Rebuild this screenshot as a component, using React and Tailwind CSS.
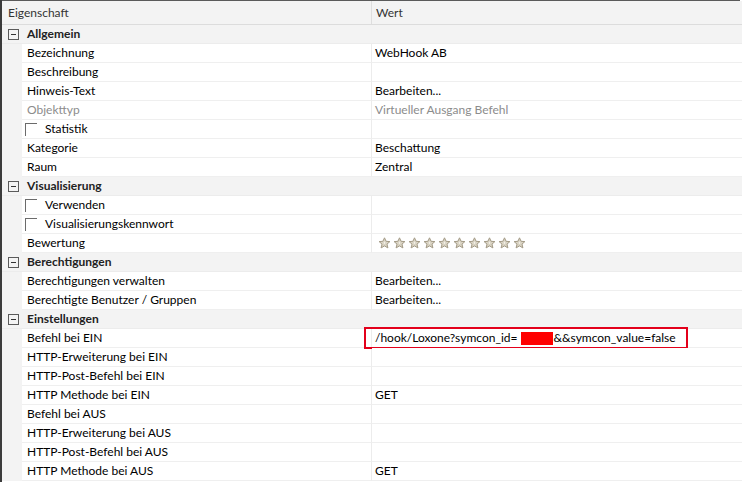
import React from "react";

const Star = () => (
  <svg width="13" height="12" viewBox="0 0 13 12" className="shrink-0">
    <path
      d="M6.5 0.8 L8.1 4.3 L11.9 4.6 L9 7.1 L9.9 10.9 L6.5 8.9 L3.1 10.9 L4 7.1 L1.1 4.6 L4.9 4.3 Z"
      fill="#d9d3c3"
      stroke="#a39a86"
      strokeWidth="1"
      strokeLinejoin="round"
    />
    <path d="M6.5 4.2 L7.3 6 L6.5 7.3 L5.7 6 Z" fill="#f4f1ea" />
  </svg>
);

const Checkbox = () => (
  <span className="inline-block w-[12px] h-[13px] border-t border-l border-[#6b6b6b] mr-[8px] ml-[-2px]" />
);

const Minus = () => (
  <span className="w-[11px] h-[11px] border border-[#5a5a5a] flex items-center justify-center">
    <span className="w-[5px] h-px bg-[#333]" />
  </span>
);

const Group = ({ title }) => (
  <div className="h-[19px] flex items-center bg-[#f3f3f3] border-b border-[#ececec]">
    <div className="w-[25px] pl-[6px] flex items-center">
      <Minus />
    </div>
    <span className="font-bold text-[#222]">{title}</span>
  </div>
);

const Row = ({ name, value, gray, check, children }) => (
  <div className="h-[19px] flex bg-[#f3f3f3]">
    <div className="w-[20px] shrink-0" />
    <div className="w-[350px] shrink-0 bg-white border-b border-[#efefef] border-r border-r-[#ececec] flex items-center pl-[5px]">
      {check && <Checkbox />}
      <span className={gray ? "text-[#8c8c8c]" : "text-black"}>{name}</span>
    </div>
    <div className="relative flex-1 bg-white border-b border-[#efefef] flex items-center pl-[3px]">
      {children ? children : <span className={gray ? "text-[#8c8c8c]" : "text-black"}>{value}</span>}
    </div>
  </div>
);

export default function App() {
  return (
    <div
      className="w-[742px] h-[482px] bg-white overflow-hidden flex text-[12px] leading-none"
      style={{ fontFamily: 'Lato, "Noto Sans", sans-serif' }}
    >
      <div className="w-[2px] bg-[#3b3b3b] shrink-0" />
      <div className="flex-1 flex flex-col">
        <div className="h-px bg-[#5a5a5a] mr-[2px]" />
        <div className="h-[24px] flex bg-[#f3f3f3] border-b border-[#dcdcdc] text-[#333]">
          <div className="w-[370px] pl-[6px] flex items-center border-r border-[#dedede]">Eigenschaft</div>
          <div className="flex-1 pl-[4px] flex items-center">Wert</div>
        </div>
        <Group title="Allgemein" />
        <Row name="Bezeichnung" value="WebHook AB" />
        <Row name="Beschreibung" value="" />
        <Row name="Hinweis-Text" value="Bearbeiten..." />
        <Row name="Objekttyp" value="Virtueller Ausgang Befehl" gray />
        <Row name="Statistik" value="" check />
        <Row name="Kategorie" value="Beschattung" />
        <Row name="Raum" value="Zentral" />
        <Group title="Visualisierung" />
        <Row name="Verwenden" value="" check />
        <Row name="Visualisierungskennwort" value="" check />
        <Row name="Bewertung">
          <div className="flex gap-[2px] pl-[3px]">
            {Array.from({ length: 10 }).map((_, i) => (
              <Star key={i} />
            ))}
          </div>
        </Row>
        <Group title="Berechtigungen" />
        <Row name="Berechtigungen verwalten" value="Bearbeiten..." />
        <Row name="Berechtigte Benutzer / Gruppen" value="Bearbeiten..." />
        <Group title="Einstellungen" />
        <Row name="Befehl bei EIN">
          <div className="absolute left-[-8px] top-[-2px] w-[324px] h-[22px] border-2 border-[#e3001b]" />
          <span>/hook/Loxone?symcon_id=</span>
          <span className="inline-block w-[32px] h-[13px] bg-[#ff0000] ml-[4px]" />
          <span>&amp;&amp;symcon_value=false</span>
        </Row>
        <Row name="HTTP-Erweiterung bei EIN" value="" />
        <Row name="HTTP-Post-Befehl bei EIN" value="" />
        <Row name="HTTP Methode bei EIN" value="GET" />
        <Row name="Befehl bei AUS" value="" />
        <Row name="HTTP-Erweiterung bei AUS" value="" />
        <Row name="HTTP-Post-Befehl bei AUS" value="" />
        <Row name="HTTP Methode bei AUS" value="GET" />
      </div>
    </div>
  );
}
